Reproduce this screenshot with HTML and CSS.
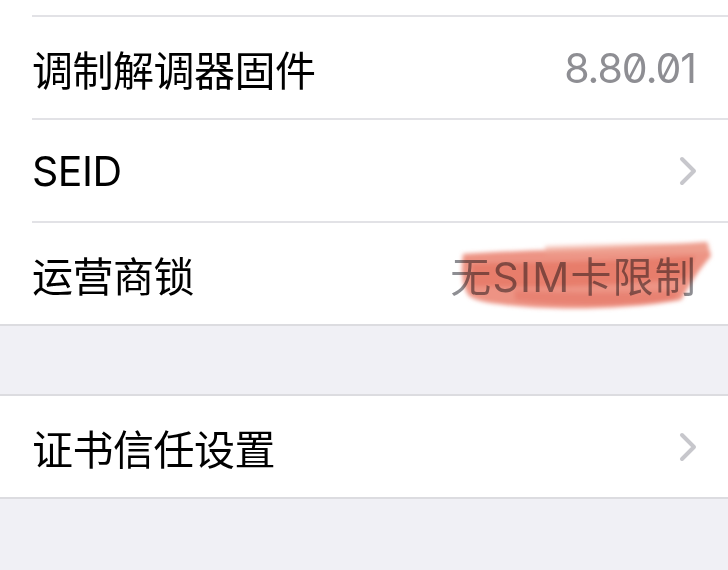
FILE: index.html
```html
<!DOCTYPE html>
<html lang="zh-CN">
<head>
<meta charset="utf-8">
<link rel="stylesheet" href="styles.css">
</head>
<body>
<div class="group first">
  <div class="row stub"><div class="cell"></div></div>
  <div class="row"><div class="cell"><span class="label">调制解调器固件</span><span class="value num">8.80.01</span></div></div>
  <div class="row"><div class="cell"><span class="label">SEID</span><svg class="chev" width="18" height="30" viewBox="0 0 18 30"><path d="M3 3 L15 15 L3 27" fill="none" stroke="#c7c7cc" stroke-width="4" stroke-linecap="round" stroke-linejoin="round"/></svg></div></div>
  <div class="row last"><div class="cell"><span class="label">运营商锁</span><span class="value sim">无SIM卡限制</span></div>
    <svg class="scribble" width="260" height="80" viewBox="0 0 260 80">
      <defs><filter id="b" x="-10%" y="-20%" width="120%" height="140%"><feGaussianBlur stdDeviation="2"/></filter></defs>
      <g filter="url(#b)">
        <path d="M8 16 C60 12 140 12 252 4 L256 18 C244 32 236 44 226 62 C170 72 100 72 62 68 C40 66 22 64 14 58 C6 46 6 30 8 16 Z" fill="#eb8473" opacity="0.88"/>
        <path d="M16 26 C80 24 160 24 240 18 L232 40 C160 48 90 50 18 48 Z" fill="#e0614e" opacity="0.45"/>
        <path d="M60 52 C110 56 170 56 224 52 L220 62 C170 68 110 68 60 62 Z" fill="#e26a58" opacity="0.4"/>
        <path d="M90 8 C150 6 200 4 254 6 L252 14 C200 14 150 16 90 16 Z" fill="#f0a898" opacity="0.6"/>
      </g>
    </svg>
  </div>
</div>
<div class="gap"></div>
<div class="group">
  <div class="row last"><div class="cell"><span class="label">证书信任设置</span><svg class="chev" width="18" height="30" viewBox="0 0 18 30"><path d="M3 3 L15 15 L3 27" fill="none" stroke="#c7c7cc" stroke-width="4" stroke-linecap="round" stroke-linejoin="round"/></svg></div></div>
</div>
</body>
</html>
```

FILE: styles.css
```css
html, body {
  margin: 0;
  padding: 0;
  background: #f0f0f5;
}
body {
  width: 728px;
  height: 570px;
  overflow: hidden;
  font-family: "Inter", "Noto Sans CJK SC", sans-serif;
  -webkit-font-smoothing: antialiased;
}
.group {
  background: #ffffff;
  border-top: 2px solid #dcdce0;
  border-bottom: 2px solid #dcdce0;
}
.group.first {
  border-top: none;
}
.row {
  position: relative;
  padding-left: 32px;
}
.cell {
  height: 101px;
  border-bottom: 2px solid #e2e2e6;
  display: flex;
  align-items: center;
  justify-content: space-between;
  padding-right: 32px;
}
.row.stub .cell {
  height: 15px;
}
.row.last .cell {
  border-bottom: none;
}
.label {
  font-size: 41px;
  color: #000000;
  letter-spacing: -0.5px;
}
.value {
  font-size: 41px;
  color: #8e8e93;
}
.sim {
  letter-spacing: 1.2px;
  margin-right: -1px;
}
.num {
  font-feature-settings: "zero" 1;
  letter-spacing: -1px;
}
.chev {
  display: block;
  margin-right: -1px;
}
.scribble {
  position: absolute;
  left: 455px;
  top: 15px;
  mix-blend-mode: multiply;
}
.gap {
  height: 68px;
}
```
